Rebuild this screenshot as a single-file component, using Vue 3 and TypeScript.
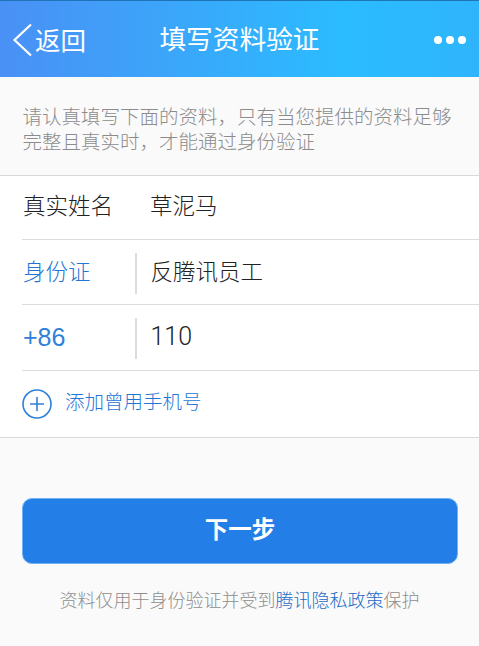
<script setup lang="ts">
</script>

<template>
  <div class="page">
    <header class="nav">
      <div class="back">
        <svg class="chev" width="20" height="34" viewBox="0 0 20 34"><path d="M19 1.5 L2.5 17 L19 32.5" fill="none" stroke="#fff" stroke-width="2.2" /></svg>
        <span>返回</span>
      </div>
      <div class="title">填写资料验证</div>
      <div class="dots"><i></i><i></i><i></i></div>
    </header>
    <p class="tip">请认真填写下面的资料，只有当您提供的资料足够完整且真实时，才能通过身份验证</p>
    <section class="form">
      <div class="row r1"><span class="label">真实姓名</span><span class="value">草泥马</span></div>
      <div class="row r2"><span class="label blue">身份证</span><span class="sep"></span><span class="value">反腾讯员工</span></div>
      <div class="row r3"><span class="label blue num">+86</span><span class="sep"></span><span class="value num">110</span></div>
      <div class="add">
        <svg width="30" height="30" viewBox="0 0 30 30"><circle cx="15" cy="15" r="14" fill="none" stroke="#2f80d8" stroke-width="1.6"/><path d="M15 8V22M8 15H22" stroke="#2f80d8" stroke-width="1.6"/></svg>
        <span class="addtext">添加曾用手机号</span>
      </div>
    </section>
    <button class="next"><span>下一步</span></button>
    <p class="foot">资料仅用于身份验证并受到<span class="link">腾讯隐私政策</span>保护</p>
  </div>
</template>

<style scoped>
.page { width: 479px; height: 646px; background: #fafafa; overflow: hidden; font-family: "Noto Sans CJK SC", "Liberation Sans", sans-serif; }
.nav { height: 77px; box-sizing: border-box; border-top: 1px solid #1f74b8; background: linear-gradient(90deg, #4a90f5 0%, #2bbcff 72%, #2fb4fb 100%); color: #fff; display: flex; align-items: center; position: relative; padding: 0 13px; }
.back { display: flex; align-items: center; font-size: 25.5px; font-weight: 400; line-height: 34px; }
.back span { margin-top: -1px; margin-left: 1px; }
.chev { margin-right: 2px; margin-left: -1px; margin-top: 2px; }
.title { position: absolute; left: 0; right: 0; text-align: center; font-size: 26.7px; line-height: 34px; margin-top: -2px; pointer-events: none; font-weight: 400; }
.dots { margin-left: auto; display: flex; gap: 4px; margin-top: 2px; }
.dots i { width: 8px; height: 8px; border-radius: 50%; background: #fff; display: block; }
.tip { margin: 0 0 0 -0.5px; padding: 26px 22px 0 23px; height: 99px; box-sizing: border-box; font-size: 19.5px; line-height: 25px; color: #8c8c8c; border-bottom: 1px solid #d9d9d9; font-weight: 300; }
.form { background: #fff; border-bottom: 1px solid #d9d9d9; padding-left: 22px; }
.row { display: flex; align-items: center; box-sizing: border-box; border-bottom: 1px solid #dcdcdc; font-size: 22.5px; color: #222; font-weight: 300; }
.r1 { height: 64px; }
.r2 { height: 65px; }
.r3 { height: 66px; }
.label, .value { line-height: 30px; }
.r1 .label, .r1 .value { margin-bottom: 8px; }
.r2 .label, .r2 .value { margin-bottom: 4px; }
.label { width: 113px; flex: none; padding-left: 1px; box-sizing: border-box; }
.r1 .label { width: 128px; }
.blue { color: #1f76d6; }
.label.num { font-family: "Liberation Sans", sans-serif; font-size: 25px; font-weight: 400; margin-bottom: 2px; color: #2f80d8; }
.value.num { font-family: Roboto, sans-serif; font-size: 25px; font-weight: 300; margin-bottom: 2px; color: #222; }
.sep { width: 1.5px; height: 41px; background: #dcdcdc; margin-right: 14px; margin-top: 2px; flex: none; }
.add { height: 66px; display: flex; align-items: center; gap: 13px; color: #1f76d6; font-size: 19.5px; font-weight: 300; }
.addtext { margin-bottom: 7px; line-height: 26px; }
.next { display: block; width: 436px; height: 66px; margin: 60px 0 0 22px; border: 1px solid #6cb2f5; border-radius: 10px; background: #247ee8; color: #fff; font-family: inherit; font-size: 23.5px; font-weight: 700; padding: 0 0 6px; }
.foot { margin: 22px 0 0; text-align: center; font-size: 18px; line-height: 26px; color: #8e8e8e; font-weight: 300; }
.link { color: #1b6cc8; }
</style>
